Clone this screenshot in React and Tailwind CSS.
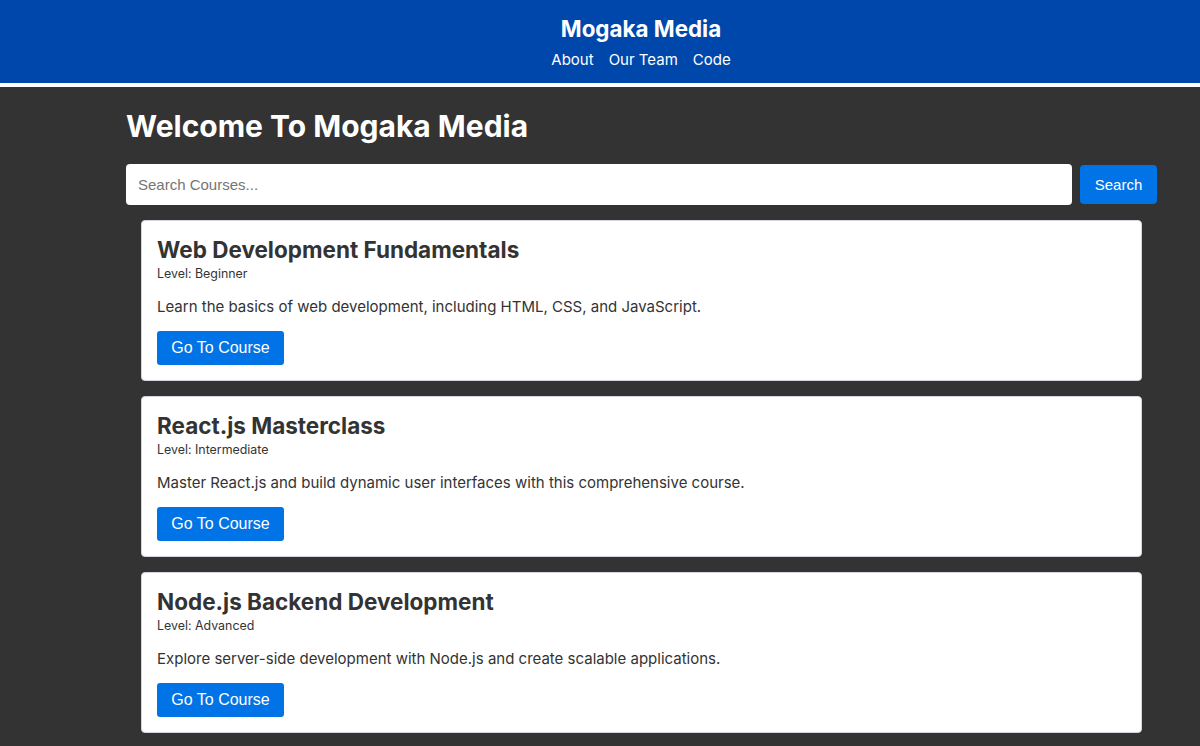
const courses = [
  {
    title: "Web Development Fundamentals",
    level: "Beginner",
    description: "Learn the basics of web development, including HTML, CSS, and JavaScript.",
  },
  {
    title: "React.js Masterclass",
    level: "Intermediate",
    description: "Master React.js and build dynamic user interfaces with this comprehensive course.",
  },
  {
    title: "Node.js Backend Development",
    level: "Advanced",
    description: "Explore server-side development with Node.js and create scalable applications.",
  },
];

function CourseCard({ course }) {
  return (
    <div className="bg-white border border-gray-300 rounded px-[15px] pt-[16px] pb-[15px] text-[#333]">
      <h2 className="text-[22.5px] leading-[26px] font-bold">{course.title}</h2>
      <p className="text-[12.4px] leading-[16px] mt-[3px]">Level: {course.level}</p>
      <p className="text-[15px] leading-[24px] mt-[13px]">{course.description}</p>
      <button className="mt-[12px] h-[34px] w-[127px] bg-[#0073e6] text-white rounded-[3px] text-[16px] font-['Liberation_Sans',Arial,sans-serif]">
        Go To Course
      </button>
    </div>
  );
}

export default function App() {
  return (
    <div className="min-h-[746px] bg-[#333333] font-['Inter',sans-serif]">
      {/* Header */}
      <header className="bg-[#0047ab] border-b-4 border-white h-[87px] pl-[82px] flex flex-col items-center text-white">
        <h1 className="text-[22.4px] font-bold leading-[30px] mt-[14px]">Mogaka Media</h1>
        <nav className="flex gap-[15px] text-[15px] leading-[20px] mt-[6px]">
          <a href="#">About</a>
          <a href="#">Our Team</a>
          <a href="#">Code</a>
        </nav>
      </header>

      <main className="w-[1031px] ml-[126px] pt-[20px]">
        <h2 className="text-white text-[30px] font-bold leading-[38px]">Welcome To Mogaka Media</h2>

        {/* Search */}
        <div className="flex gap-[8px] mt-[19px] items-center">
          <input
            className="flex-1 h-[41px] bg-white rounded-[4px] px-[12px] text-[15px] outline-none font-['Liberation_Sans',Arial,sans-serif] placeholder:text-[#757575]"
            placeholder="Search Courses..."
          />
          <button className="w-[77px] h-[39px] pt-[1px] bg-[#0073e6] text-white rounded-[4px] text-[15px] font-['Liberation_Sans',Arial,sans-serif]">
            Search
          </button>
        </div>

        {/* Courses */}
        <div className="flex flex-col gap-[15px] mt-[15px] mx-[15px]">
          {courses.map((c) => (
            <CourseCard key={c.title} course={c} />
          ))}
        </div>
      </main>
    </div>
  );
}
